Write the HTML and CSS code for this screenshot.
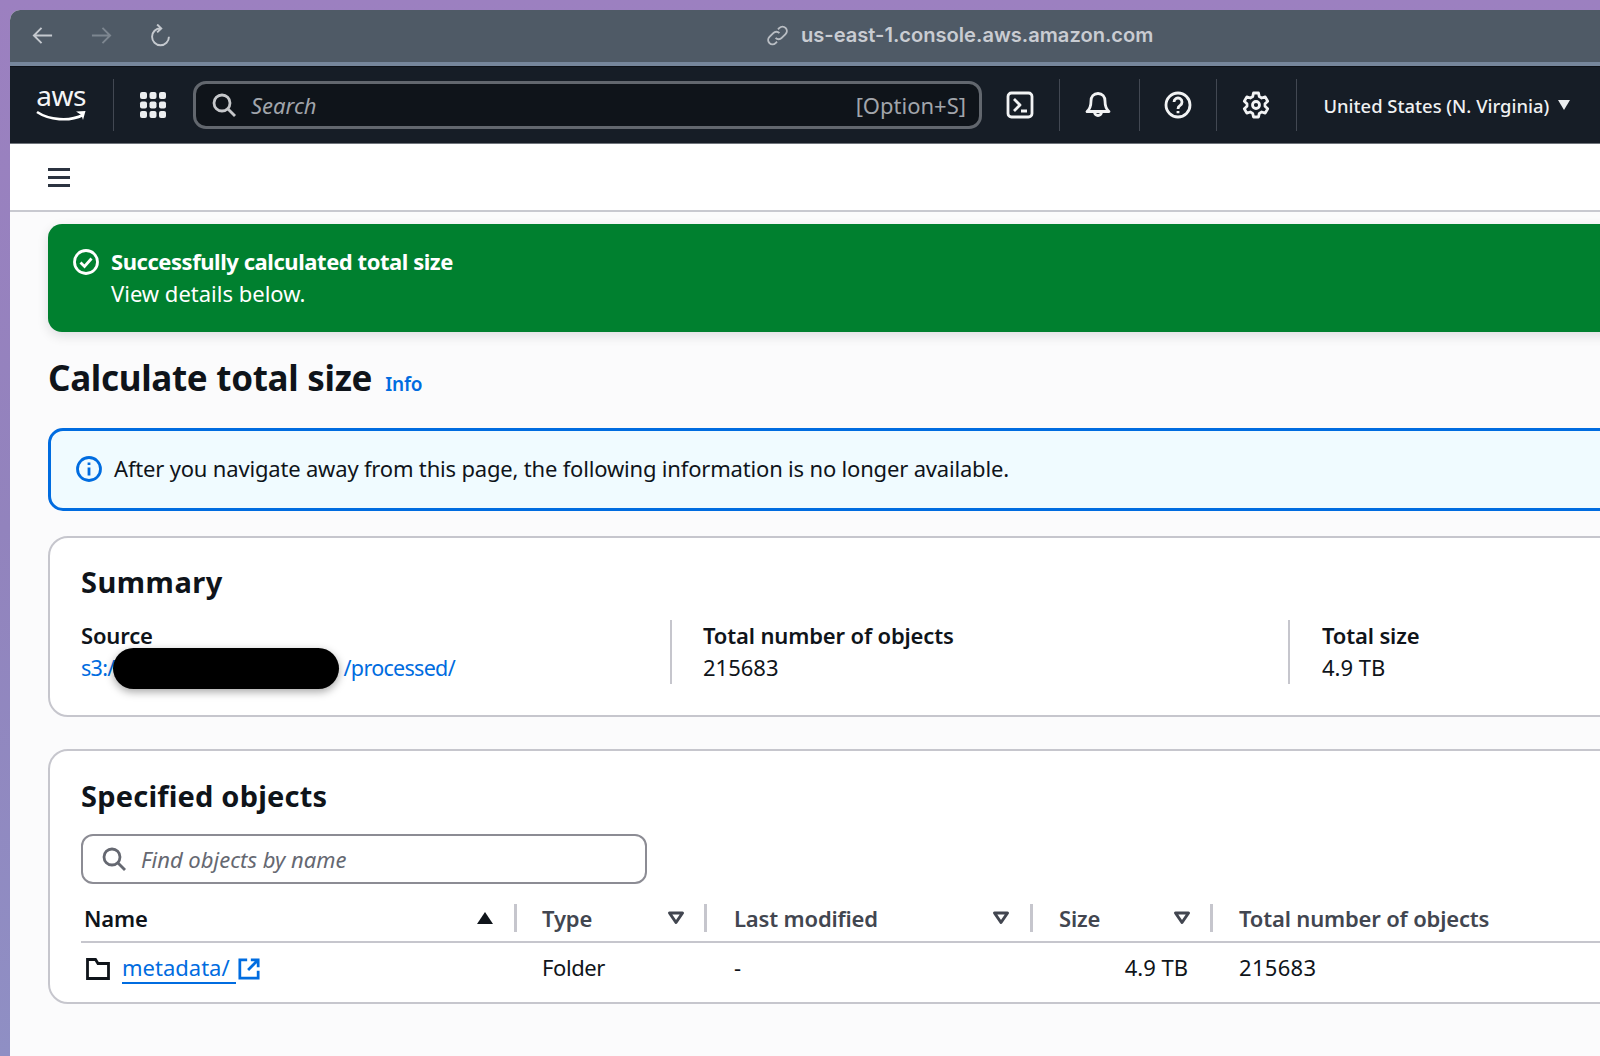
FILE: index.html
```html
<!DOCTYPE html>
<html lang="en">
<head>
<meta charset="utf-8">
<title>Calculate total size</title>
<link rel="stylesheet" href="styles.css">
</head>
<body>
<div class="window">
  <div class="browser-bar">
    <div class="browser-nav">
      <svg class="bicon" viewBox="0 0 24 24"><path d="M22 12H3M11 4l-8 8 8 8"/></svg>
      <svg class="bicon dim" viewBox="0 0 24 24"><path d="M2 12h19M13 4l8 8-8 8"/></svg>
      <svg class="bicon" viewBox="0 0 24 24"><path d="M12 4.500a8.800 8.800 0 1 0 8.800 8.800M8.500 0.500 12.800 4.600 8.500 8.800"/></svg>
    </div>
    <div class="url">
      <svg class="link-icon" viewBox="0 0 24 24"><path d="M10 14.500a4.500 4.500 0 0 0 6.400 0l4-4a4.500 4.500 0 0 0-6.400-6.400l-1.500 1.500M14 9.500a4.500 4.500 0 0 0-6.400 0l-4 4a4.500 4.500 0 0 0 6.400 6.400l1.500-1.500"/></svg>
      <span>us-east-1.console.aws.amazon.com</span>
    </div>
  </div>
  <header class="topnav">
    <div class="logo">
      <span class="logo-text">aws</span>
      <svg class="smile" viewBox="0 0 52 14"><path class="smile-line" d="M2 2c12 8 32 10 46 3"/><path class="smile-tip" d="M41 1.500l9.500-.5-2.500 9-1.600-5z"/></svg>
    </div>
    <span class="nav-sep"></span>
    <svg class="apps" viewBox="0 0 28 28"><g><rect x="1" y="1" width="7" height="7" rx="2"/><rect x="10.500" y="1" width="7" height="7" rx="2"/><rect x="20" y="1" width="7" height="7" rx="2"/><rect x="1" y="10.500" width="7" height="7" rx="2"/><rect x="10.500" y="10.500" width="7" height="7" rx="2"/><rect x="20" y="10.500" width="7" height="7" rx="2"/><rect x="1" y="20" width="7" height="7" rx="2"/><rect x="10.500" y="20" width="7" height="7" rx="2"/><rect x="20" y="20" width="7" height="7" rx="2"/></g></svg>
    <div class="global-search">
      <svg class="gs-icon" viewBox="0 0 24 24"><circle cx="10" cy="10" r="8"/><path d="M16 16l7 7"/></svg>
      <span class="gs-placeholder">Search</span>
      <span class="gs-key">[Option+S]</span>
    </div>
    <div class="nav-icons">
      <div class="nav-cell cell-term"><svg class="nicon" viewBox="0 0 28 28"><rect x="2" y="2" width="24" height="24" rx="3.500"/><path d="M8 8l6 6-6 6M15 20h6"/></svg></div>
      <span class="nav-sep"></span>
      <div class="nav-cell cell-bell"><svg class="nicon" viewBox="0 0 28 28"><path d="M14 2.500c-4.500 0-7 3.500-7 7.500 0 5-1 8-4 10.500h22c-3-2.500-4-5.500-4-10.500 0-4-2.500-7.500-7-7.500zM10.500 21a3.500 3.500 0 0 0 7 0"/></svg></div>
      <span class="nav-sep"></span>
      <div class="nav-cell cell-help"><svg class="nicon" viewBox="0 0 28 28"><circle cx="14" cy="14" r="12"/><path d="M10 11a4 4 0 1 1 6 3.500c-1.500.8-2 1.500-2 3.500"/><path d="M14 20v2.200"/></svg></div>
      <span class="nav-sep"></span>
      <div class="nav-cell cell-gear"><svg class="nicon" viewBox="0 0 28 28"><path d="M11.500 2h5l.8 3.600 2.400 1.400 3.500-1.100 2.500 4.300-2.700 2.500v2.600l2.700 2.500-2.500 4.300-3.500-1.100-2.400 1.400-.8 3.600h-5l-.8-3.600-2.400-1.400-3.500 1.100-2.500-4.300 2.700-2.500v-2.600L2.300 10.200l2.500-4.300 3.500 1.100 2.400-1.400z"/><circle cx="14" cy="14" r="3.500"/></svg></div>
      <span class="nav-sep"></span>
    </div>
    <div class="region">United States (N. Virginia)<span class="caret"></span></div>
  </header>
  <div class="subnav">
    <div class="burger"><span></span><span></span><span></span></div>
  </div>
  <main class="content">
    <div class="flash">
      <svg class="flash-icon" viewBox="0 0 28 28"><circle cx="14" cy="14" r="11.500"/><path d="M8.500 14.500l4 4 7-8"/></svg>
      <div class="flash-text">
        <div class="flash-title">Successfully calculated total size</div>
        <div>View details below.</div>
      </div>
    </div>
    <div class="page-head">
      <h1>Calculate total size</h1>
      <a class="info-link">Info</a>
    </div>
    <div class="alert">
      <svg class="alert-icon" viewBox="0 0 28 28"><circle cx="14" cy="14" r="11.500"/><path d="M14 12.500v8M14 7.500v2.500"/></svg>
      <span>After you navigate away from this page, the following information is no longer available.</span>
    </div>
    <section class="card summary">
      <h2>Summary</h2>
      <div class="summary-grid">
        <div class="stat stat-source">
          <div class="label">Source</div>
          <a class="link source-link">s3:/<span class="redact-gap"></span>/processed/<span class="redact"></span></a>
        </div>
        <div class="stat stat-count">
          <div class="label">Total number of objects</div>
          <div>215683</div>
        </div>
        <div class="stat stat-size">
          <div class="label">Total size</div>
          <div>4.9 TB</div>
        </div>
      </div>
    </section>
    <section class="card objects">
      <h2>Specified objects</h2>
      <div class="find">
        <svg class="find-icon" viewBox="0 0 24 24"><circle cx="10" cy="10" r="8"/><path d="M16 16l7 7"/></svg>
        <span>Find objects by name</span>
      </div>
      <table class="objects-table">
        <thead>
          <tr>
            <th class="col-name"><div class="th-in th-active"><span>Name</span><svg class="sort" viewBox="0 0 18 14"><path class="sort-fill" d="M9 1l8 12H1z"/></svg></div></th>
            <th class="col-type"><div class="th-in"><span>Type</span><svg class="sort" viewBox="0 0 18 14"><path d="M2.500 2h13L9 11.500z"/></svg></div></th>
            <th class="col-mod"><div class="th-in"><span>Last modified</span><svg class="sort" viewBox="0 0 18 14"><path d="M2.500 2h13L9 11.500z"/></svg></div></th>
            <th class="col-size"><div class="th-in"><span>Size</span><svg class="sort" viewBox="0 0 18 14"><path d="M2.500 2h13L9 11.500z"/></svg></div></th>
            <th class="col-total"><div class="th-in"><span>Total number of objects</span></div></th>
          </tr>
        </thead>
        <tbody>
          <tr>
            <td class="cell-name"><svg class="folder" viewBox="0 0 24 24"><path d="M1.500 2.500h8l2.500 4h10.500v15h-21z"/></svg><a class="meta-link"><span class="meta-text">metadata/</span><svg class="ext" viewBox="0 0 24 24"><path d="M10 2H2v20h20v-8M14 2h8v8M22 2L11 13"/></svg></a></td>
            <td class="cell-type">Folder</td>
            <td class="cell-mod">-</td>
            <td class="cell-size">4.9 TB</td>
            <td class="cell-total">215683</td>
          </tr>
        </tbody>
      </table>
    </section>
  </main>
</div>
</body>
</html>
```
FILE: styles.css
```css
* { box-sizing: border-box; }
html, body { margin: 0; height: 100%; }
body {
  width: 1600px;
  height: 1056px;
  overflow: hidden;
  padding: 10px 0 0 10px;
  background: linear-gradient(180deg, #9c80c0 0%, #9283bd 50%, #8f8fc4 100%);
  font-family: "Noto Sans", "Open Sans", sans-serif;
  font-size: 22px;
  color: #0f141a;
}
.window {
  width: 1590px;
  height: 1046px;
  background: #fbfbfc;
  border-top-left-radius: 10px;
  overflow: hidden;
  display: flex;
  flex-direction: column;
}
.browser-bar {
  height: 56px;
  flex: none;
  background: #4f5a66;
  border-bottom: 4px solid #76869b;
  display: flex;
  align-items: center;
  padding: 0 0 2px 21px;
}
.browser-nav { display: flex; gap: 36px; align-items: center; }
.bicon { width: 23px; height: 23px; fill: none; stroke: #c5c9cf; stroke-width: 2; }
.bicon.dim { stroke: #7d8690; }
.url {
  margin-left: 594px;
  display: flex;
  align-items: center;
  gap: 12px;
  font-family: "Inter", "Liberation Sans", sans-serif;
  font-size: 20.100px;
  font-weight: 600;
  color: #c9ccd2;
}
.link-icon { width: 23px; height: 23px; fill: none; stroke: #b9bdc3; stroke-width: 2; }
.topnav {
  height: 78px;
  flex: none;
  background: #161d26;
  border-top: 1px solid #0d1117;
  border-bottom: 1px solid #6f747b;
  display: flex;
  align-items: center;
  padding-left: 26px;
  color: #fff;
}
.logo { width: 50px; height: 50px; display: flex; flex-direction: column; align-items: center; }
.logo-text { font-size: 28px; line-height: 31px; height: 31px; letter-spacing: -.5px; color: #f4f5f6; }
.smile { width: 52px; height: 14px; margin-top: -1px; }
.smile-line { fill: none; stroke: #fff; stroke-width: 2.600; }
.smile-tip { fill: #fff; }
.nav-sep { width: 1px; height: 52px; background: #424852; flex: none; }
.logo + .nav-sep { margin-left: 27px; }
.apps { width: 28px; height: 28px; margin-left: 25px; fill: #eceef0; flex: none; }
.global-search {
  margin-left: 26px;
  width: 789px;
  height: 48px;
  flex: none;
  background: #0f141a;
  border: 3px solid #62676e;
  border-radius: 13px;
  display: flex;
  align-items: center;
  padding: 0 13px 0 16px;
  color: #a1a5ab;
}
.gs-icon { width: 24px; height: 24px; fill: none; stroke: #c5c7ca; stroke-width: 2.800; flex: none; }
.gs-placeholder { margin-left: 15px; font-style: italic; }
.gs-key { margin-left: auto; }
.nav-icons { display: flex; align-items: center; margin-left: 11px; }
.nav-cell { display: flex; justify-content: center; }
.cell-term { width: 66px; padding-right: 12px; }
.cell-bell { width: 78.500px; padding-right: 2px; }
.cell-help { width: 76px; }
.cell-gear { width: 79px; }
.nicon { width: 28px; height: 28px; fill: none; stroke: #f2f3f4; stroke-width: 2.800; stroke-linejoin: round; }
.region { margin-left: 27px; font-size: 18.400px; font-weight: 500; color: #f0f1f2; display: flex; align-items: center; white-space: nowrap; }
.caret {
  margin-left: 9px;
  width: 0;
  height: 0;
  border-left: 6.500px solid transparent;
  border-right: 6.500px solid transparent;
  border-top: 10px solid #eceef0;
}
.subnav {
  height: 68px;
  flex: none;
  background: #fff;
  border-bottom: 2px solid #c8c9d0;
  padding: 0 0 0 38px;
  display: flex;
  align-items: center;
}
.burger { width: 22px; display: flex; flex-direction: column; gap: 5px; }
.burger span { display: block; height: 3px; background: #2b3340; }
.content { flex: 1; padding: 12px 0 0 38px; overflow: hidden; }
.flash {
  width: 1600px;
  height: 108px;
  background: #00802f;
  color: #fff;
  border-radius: 14px;
  box-shadow: 0 4px 12px rgba(0, 7, 22, .12);
  display: flex;
  padding: 21px 24px;
  line-height: 32px;
}
.flash-icon { width: 28px; height: 28px; margin: 3px 11px 0 0; fill: none; stroke: #fff; stroke-width: 2.800; flex: none; }
.flash-title { font-weight: 700; letter-spacing: -.45px; }
.page-head { display: flex; align-items: baseline; height: 96px; padding-top: 23px; }
h1 { margin: 0; font-size: 35px; line-height: 46px; font-weight: 700; letter-spacing: -.3px; }
.info-link { margin-left: 13px; font-size: 19px; font-weight: 600; color: #006ce0; letter-spacing: -.2px; }
.alert {
  width: 1600px;
  height: 83px;
  background: #f0fbff;
  border: 3px solid #006ce0;
  border-radius: 15px;
  display: flex;
  align-items: center;
  padding: 0 0 3px 24px;
  letter-spacing: -.18px;
}
.alert-icon { width: 28px; height: 28px; margin: 2px 11px 0 0; fill: none; stroke: #006ce0; stroke-width: 2.800; flex: none; }
.card {
  width: 1600px;
  background: #fff;
  border: 2px solid #c6c6cd;
  border-radius: 20px;
  padding: 0 0 0 31px;
}
h2 { margin: 0; font-size: 29px; line-height: 40px; font-weight: 700; }
.summary { height: 181px; margin-top: 25px; padding-top: 24px; }
.summary h2 { letter-spacing: .5px; }
.objects h2 { letter-spacing: .2px; }
.summary-grid { display: flex; margin-top: 18px; line-height: 32px; }
.stat { height: 64px; flex: none; }
.stat-source { width: 589px; }
.stat-count { width: 618px; border-left: 2px solid #c6c6cd; padding-left: 31px; }
.stat-size { border-left: 2px solid #c6c6cd; padding-left: 32px; }
.label { font-weight: 600; margin-top: -1px; letter-spacing: -.15px; }
.link { color: #006ce0; }
.source-link { position: relative; display: inline-block; letter-spacing: -.7px; font-size: 21.500px; }
.redact-gap { display: inline-block; width: 229px; }
.redact {
  position: absolute;
  left: 32px;
  top: -4px;
  width: 226px;
  height: 41px;
  border-radius: 21px;
  background: #000;
  box-shadow: 0 3px 8px rgba(0, 0, 0, .35);
}
.objects { height: 255px; margin-top: 32px; padding-top: 25px; }
.find {
  margin-top: 18px;
  width: 566px;
  height: 50px;
  border: 2px solid #8c8c94;
  border-radius: 12px;
  display: flex;
  align-items: center;
  padding-left: 19px;
  color: #656871;
  font-style: italic;
}
.find-icon { width: 24px; height: 24px; fill: none; stroke: #656871; stroke-width: 2.800; margin-right: 15px; flex: none; }
.objects-table { border-collapse: collapse; table-layout: fixed; width: 1600px; margin-top: 8px; }
.col-name { width: 436px; }
.col-type { width: 190px; }
.col-mod { width: 326px; }
.col-size { width: 180px; }
thead tr { height: 50px; border-bottom: 2px solid #c6c6cd; }
th { padding: 2px 0 0; text-align: left; font-weight: 600; color: #424650; white-space: nowrap; letter-spacing: -.17px; }
.th-in { height: 28px; display: flex; align-items: center; justify-content: space-between; border-right: 3px solid #c6c6cd; padding: 0 19px 0 26px; }
.col-type .th-in { padding-left: 25px; }
.col-name .th-in { padding: 0 20px 0 3px; color: #0f141a; }
.col-mod .th-in { padding: 0 20px 0 27px; }
.col-total .th-in { border-right: 0; }
.sort { width: 18px; height: 14px; fill: none; stroke: #424650; stroke-width: 3; stroke-linejoin: round; }
.sort-fill { fill: #0f141a; stroke: none; }
td { padding: 0 0 0 26px; height: 48px; white-space: nowrap; }
.cell-name { padding-left: 5px; }
.cell-type { padding-left: 25px; letter-spacing: -.4px; }
.cell-mod { padding-left: 27px; }
.cell-size { text-align: right; padding-right: 25px; }
.cell-total { letter-spacing: .3px; }
.folder { width: 24px; height: 24px; fill: none; stroke: #0f141a; stroke-width: 2.800; vertical-align: -5px; margin-right: 12px; }
.meta-link { color: #006ce0; }
.meta-text { border-bottom: 2px solid #006ce0; padding-right: 6px; }
.ext { width: 22px; height: 22px; fill: none; stroke: #006ce0; stroke-width: 3; vertical-align: -4px; margin-left: 2px; }
```
